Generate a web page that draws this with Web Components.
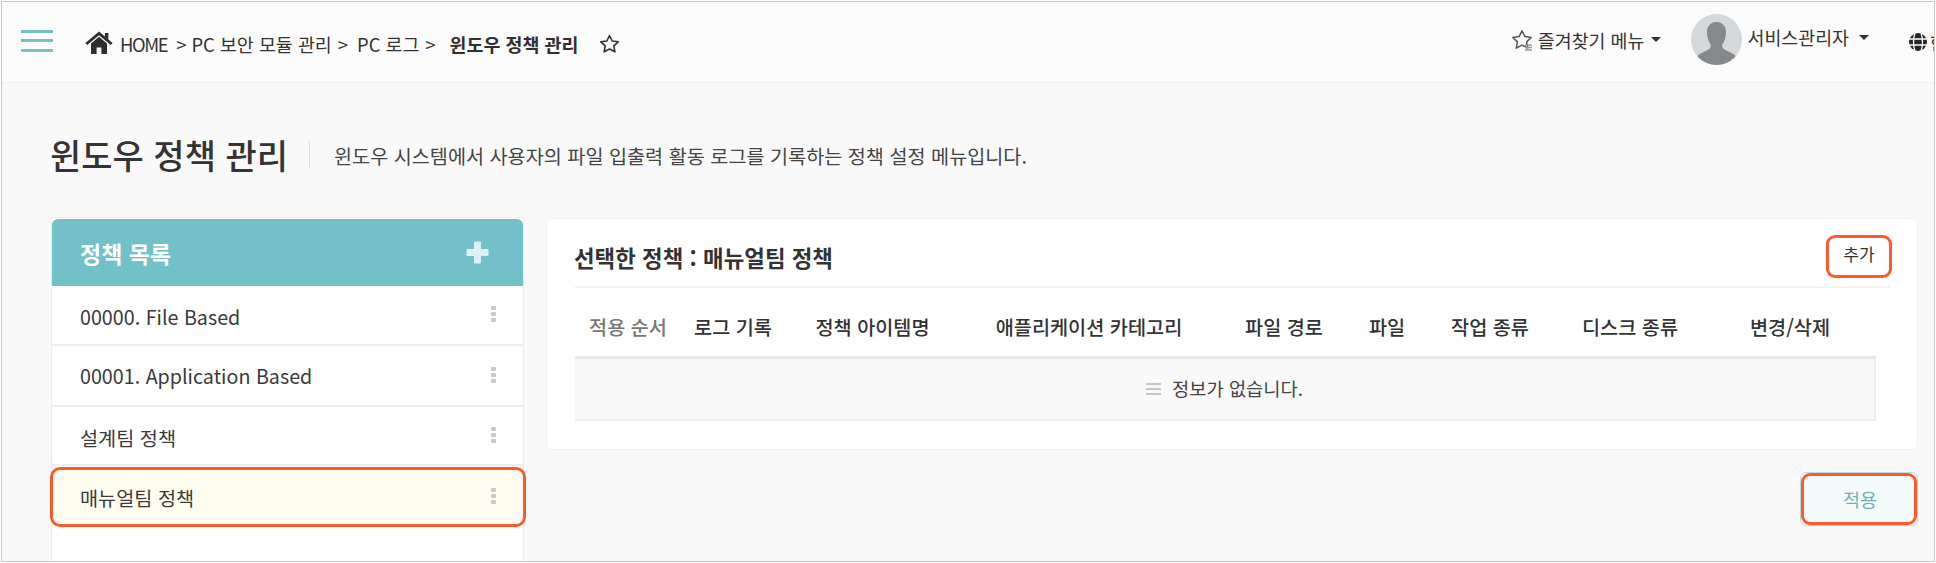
<!DOCTYPE html>
<html lang="ko">
<head>
<meta charset="utf-8">
<title>윈도우 정책 관리</title>
<style>
html,body{margin:0;padding:0;background:#fff;overflow:hidden}
body{font-family:"Noto Sans CJK KR","Noto Sans",sans-serif;color:#333}
</style>
</head>
<body>
<app-shell>
  <top-bar slot="top"></top-bar>
  <page-title slot="title" heading="윈도우 정책 관리" desc="윈도우 시스템에서 사용자의 파일 입출력 활동 로그를 기록하는 정책 설정 메뉴입니다."></page-title>
  <policy-list slot="side">
    <policy-row style="height:60px;--o:3px">00000. File Based</policy-row>
    <policy-row style="height:61px;--o:-1px">00001. Application Based</policy-row>
    <policy-row style="height:59px;--o:3px">설계팀 정책</policy-row>
    <policy-row style="--o:1px" selected>매뉴얼팀 정책</policy-row>
  </policy-list>
  <policy-card slot="main" heading="선택한 정책 : 매뉴얼팀 정책">
    <action-button slot="action" kind="add">추가</action-button>
    <data-table></data-table>
  </policy-card>
  <action-button slot="footer" kind="apply">적용</action-button>
</app-shell>
<script>
const def=(name,html,extra)=>{
  const t=document.createElement('template');t.innerHTML=html;
  customElements.define(name,class extends HTMLElement{
    constructor(){super();this.attachShadow({mode:'open'}).appendChild(t.content.cloneNode(true));}
    connectedCallback(){if(extra)extra(this,this.shadowRoot);}
  });
};

def('app-shell',`<style>
:host{display:block;box-sizing:border-box;margin:1px;width:1934px;height:561px;border:1px solid #c9c9c9;background:#f9f9f9;overflow:hidden}
.content{display:grid;grid-template-columns:473px 1fr;column-gap:22px;padding:0 16px 0 49px;align-items:start}
.right{display:flex;flex-direction:column;align-items:flex-end;gap:22px;padding-top:1px}
::slotted([slot=main]){align-self:stretch}
</style>
<slot name="top"></slot><slot name="title"></slot>
<div class="content"><slot name="side"></slot><div class="right"><slot name="main"></slot><slot name="footer"></slot></div></div>`);

def('top-bar',`<style>
:host{display:flex;align-items:center;box-sizing:border-box;height:81px;border-bottom:1px solid #efefef;background:#fbfbfb;font-size:18.4px;color:#333;white-space:nowrap}
.burger{display:flex;flex-direction:column;gap:6.5px;width:32px;margin:-3px 0 0 19px}
.burger i{display:block;height:3px;background:#74c2c8}
.crumbs{display:flex;align-items:center;margin-left:32px;flex:1;margin-top:3px}
.home{width:28px;height:23px;margin-right:7px;margin-top:-2px}
.crumbs span{margin-right:9px}
.crumbs span.hm{letter-spacing:-1.4px;margin-right:9px}
.crumbs span.g{margin-right:5px}
.crumbs span.t{margin-right:6px}
.crumbs b{font-weight:700;color:#2f2f2f;margin:0 21px 0 5px}
.star{width:21px;height:19px}
.fav{display:flex;align-items:center;margin-right:30px;margin-top:-5px}
.fav svg.s{width:22px;height:22px;margin-right:5px}
.caret{width:0;height:0;border:5px solid transparent;border-top-color:#333;border-bottom:0;margin-left:7px}
.user{display:flex;align-items:center;margin-right:40px;margin-top:-6px}
.user svg{width:51px;height:51px;margin-right:5px}
.user .n{margin-top:-4px;display:flex;align-items:center}
.lang{display:flex;align-items:center;width:25px;overflow:hidden;margin-top:-1px;flex:none}
.lang svg{width:18px;height:18px;flex:none;margin-right:3px}
</style>
<div class="burger"><i></i><i></i><i></i></div>
<div class="crumbs">
  <svg class="home" viewBox="0 0 28 23"><path fill="#2e2e2e" d="M6 12.5 14 5.8l8 6.7V23h-5.6v-6.6h-4.8V23H6z"/><path fill="none" stroke="#2e2e2e" stroke-width="2.8" d="M1.3 13 14 2.4 26.7 13"/><path fill="#2e2e2e" d="M20 2h3.4v6.5L20 6z"/></svg>
  <span class="hm">HOME</span><span class="g">&gt;</span><span class="t">PC 보안 모듈 관리</span><span>&gt;</span><span class="t">PC 로그</span><span>&gt;</span><b>윈도우 정책 관리</b>
  <svg class="star" viewBox="0 0 21 19"><path fill="none" stroke="#333" stroke-width="1.6" stroke-linejoin="round" d="M10.5 1.6l2.7 5.4 6 .8-4.4 4.1 1.1 5.900-5.400-2.800-5.400 2.800 1.100-5.900L1.800 7.800l6-.8z"/></svg>
</div>
<div class="fav">
  <svg class="s" viewBox="0 0 22 22"><path fill="none" stroke="#555" stroke-width="1.5" stroke-linejoin="round" d="M11 1.8l2.9 5.8 6.3.9-4.6 4.4 1.1 6.2L11 16.2l-5.7 2.9 1.1-6.2-4.6-4.4 6.3-.9z"/><path stroke="#999" stroke-width="1.6" d="M14 16h7M14 18.500h7M14 21h7"/></svg>
  <span>즐겨찾기 메뉴</span><i class="caret"></i>
</div>
<div class="user">
  <svg viewBox="0 0 51 51"><defs><clipPath id="av"><circle cx="25.500" cy="25.500" r="25.500"/></clipPath></defs><circle cx="25.500" cy="25.500" r="25.500" fill="#d5d8da"/><g clip-path="url(#av)" fill="#878889"><path d="M25.500 8c6.200 0 9.500 4.300 9.500 10.200 0 5-1.500 9.300-3.600 12-.6 2.400.2 4.300 2.500 5.500l8.500 4.300c2 1 3.100 3 3.600 11H5c.5-8 1.600-10 3.600-11l8.500-4.300c2.300-1.200 3.100-3.100 2.500-5.500-2.100-2.700-3.600-7-3.600-12C16 12.300 19.300 8 25.500 8z"/></g></svg>
  <div class="n"><span>서비스관리자</span><i class="caret" style="margin-left:10px"></i></div>
</div>
<div class="lang">
  <svg viewBox="0 0 18 18"><circle cx="9" cy="9" r="9" fill="#262626"/><path stroke="#fff" stroke-width="1.300" fill="none" d="M0 6h18M0 12h18M6 0c-2 5-2 13 0 18M12 0c2 5 2 13 0 18"/></svg>
  <span>한국어</span>
</div>`);

def('page-title',`<style>
:host{display:flex;align-items:center;box-sizing:border-box;height:134px;padding:9px 0 0 48px;white-space:nowrap}
h1{margin:0;font-size:34px;font-weight:500;color:#333;line-height:40px}
i{display:block;width:1px;height:28px;background:#dedede;margin:0 24px 0 21px}
p{margin:2px 0 0;font-size:19.650px;color:#444;line-height:28px}
</style><h1></h1><i></i><p></p>`,(h,s)=>{
  s.querySelector('h1').textContent=h.getAttribute('heading');
  s.querySelector('p').textContent=h.getAttribute('desc');
});

def('policy-list',`<style>
:host{display:block;box-sizing:border-box;height:400px;background:#fff;border:1px solid #ececec;border-bottom:0}
.inner{margin-top:1px}
header{display:flex;align-items:center;justify-content:space-between;height:67px;box-sizing:border-box;padding:0 34px 0 28px;background:#73c1c8;border-radius:6px 6px 0 0;color:#fff;font-size:23px;font-weight:700}
svg{width:23px;height:23px;fill:#deeff1}
</style><div class="inner"><header><span>정책 목록</span><svg viewBox="0 0 23 23"><path d="M8 1.500a1 1 0 0 1 1-1h5a1 1 0 0 1 1 1V8h6.500a1 1 0 0 1 1 1v5a1 1 0 0 1-1 1H15v6.500a1 1 0 0 1-1 1H9a1 1 0 0 1-1-1V15H1.500a1 1 0 0 1-1-1V9a1 1 0 0 1 1-1H8z"/></svg></header><slot></slot></div>`);

def('policy-row',`<style>
:host{display:flex;align-items:center;justify-content:space-between;position:relative;box-sizing:border-box;height:60px;padding:0 27px 0 28px;border-bottom:2px solid #eeeeee;font-size:19.700px;color:#3a3a3a;background:#fff}
:host([selected]){background:#fffdf0;border-bottom:0;margin-top:1px;height:60px}
:host([selected])::after{content:"";position:absolute;left:-2px;right:-3px;top:0;bottom:0;border:3.500px solid #ff5a2e;border-radius:10px;box-sizing:border-box}
span{margin-top:var(--o,0)}
.k{display:flex;flex-direction:column;gap:2px;margin-top:-2px}
.k i{display:block;width:5px;height:4px;background:#c9c9c9;border-radius:1px}
</style><span><slot></slot></span><div class="k"><i></i><i></i><i></i></div>`);

def('policy-card',`<style>
:host{display:block;box-sizing:border-box;height:232px;background:#fff;border:1px solid #f2f2f2;border-radius:6px;padding:0 27px 0 28px}
.head{display:flex;align-items:center;justify-content:space-between;height:67px;border-bottom:2px solid #f2f2f2}
h2{margin:8px 0 0 -1px;font-size:22.400px;font-weight:700;color:#333;white-space:nowrap}
.body{margin-right:14px}
</style><div class="head"><h2></h2><slot name="action"></slot></div><div class="body"><slot></slot></div>`,(h,s)=>{
  s.querySelector('h2').textContent=h.getAttribute('heading');
});

def('action-button',`<style>
:host{display:flex;align-items:center;justify-content:center;box-sizing:border-box;position:relative;white-space:nowrap}
:host([kind=add]){width:62px;height:41px;font-size:17px;color:#333;background:#fff;margin-top:8px;padding-bottom:6px}
:host([kind=apply]){width:118px;height:54px;font-size:18.500px;color:#6fb2b4;background:#f5fbfb;border:1px solid #b5e0e3;border-radius:6px;padding-left:2px}
:host::after{content:"";position:absolute;box-sizing:border-box;border:3.500px solid #ff5a2e;border-radius:9px}
:host([kind=add])::after{left:-2px;right:-2px;top:-1px;bottom:-1px}
:host([kind=apply])::after{left:0;right:0;top:0;bottom:0}
</style><slot></slot>`);

const cols=[['적용 순서',106,'#777'],['로그 기록',104],['정책 아이템명',175],['애플리케이션 카테고리',258],['파일 경로',132],['파일',74],['작업 종류',132],['디스크 종류',148],['변경/삭제',172]];
def('data-table',`<style>
:host{display:block}
.h{display:grid;grid-template-columns:${cols.map(c=>c[1]+'px').join(' ')};height:68px;align-items:center;border-bottom:3px solid #e8e8e8;font-size:19.700px;font-weight:500;color:#333;white-space:nowrap;box-sizing:content-box}
.h div{text-align:center;margin-top:8px}
.e{display:flex;align-items:center;justify-content:center;height:60px;background:#f9f9f9;border:1px solid #ededed;border-width:0 2px 2px 0;font-size:18.700px;color:#444}
.e svg{width:15px;height:12px;margin-right:11px}
.e span{margin-top:-3px}
</style><div class="h"></div>
<div class="e"><svg viewBox="0 0 15 12"><path stroke="#c4c6ca" stroke-width="2" d="M0 1h15M0 6h15M0 11h15"/></svg><span>정보가 없습니다.</span></div>`,(h,s)=>{
  const r=s.querySelector('.h');
  cols.forEach(c=>{const d=document.createElement('div');d.textContent=c[0];if(c[2])d.style.color=c[2];r.appendChild(d);});
});
</script>
</body>
</html>
